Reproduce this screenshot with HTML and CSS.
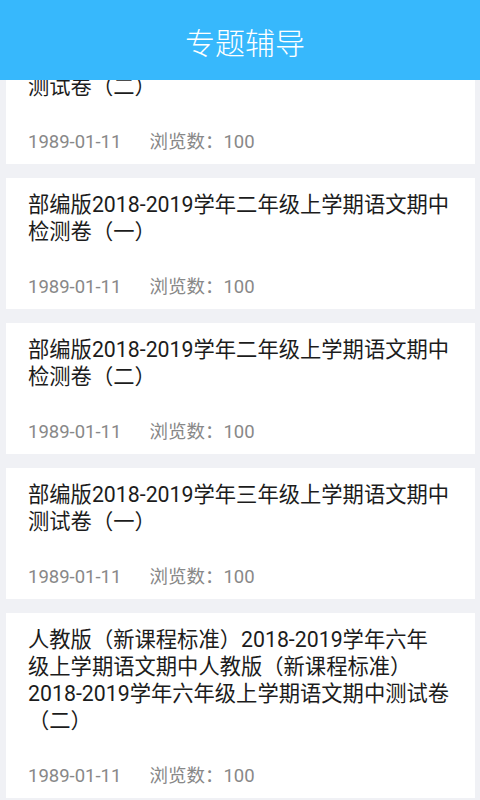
FILE: index.html
```html
<!DOCTYPE html>
<html lang="zh-CN">
<head>
<meta charset="utf-8">
<title>专题辅导</title>
<link rel="stylesheet" href="styles.css">
</head>
<body>
<div class="app">
<header class="topbar"><h1 class="topbar-title">专题辅导</h1></header>
<main class="list" id="list">
  <article class="card">
    <h2 class="card-title">部编版2018-2019学年二年级上学期语文期中<br>测试卷（二）</h2>
    <div class="card-meta"><span class="date">1989-01-11</span><span>浏览数：100</span></div>
  </article>
  <article class="card">
    <h2 class="card-title">部编版2018-2019学年二年级上学期语文期中<br>检测卷（一）</h2>
    <div class="card-meta"><span class="date">1989-01-11</span><span>浏览数：100</span></div>
  </article>
  <article class="card">
    <h2 class="card-title">部编版2018-2019学年二年级上学期语文期中<br>检测卷（二）</h2>
    <div class="card-meta"><span class="date">1989-01-11</span><span>浏览数：100</span></div>
  </article>
  <article class="card">
    <h2 class="card-title">部编版2018-2019学年三年级上学期语文期中<br>测试卷（一）</h2>
    <div class="card-meta"><span class="date">1989-01-11</span><span>浏览数：100</span></div>
  </article>
  <article class="card">
    <h2 class="card-title">人教版（新课程标准）2018-2019学年六年<br>级上学期语文期中人教版（新课程标准）<br>2018-2019学年六年级上学期语文期中测试卷<br>（二）</h2>
    <div class="card-meta"><span class="date">1989-01-11</span><span>浏览数：100</span></div>
  </article>
</main>
</div>
<script src="app.js"></script>
</body>
</html>
```

FILE: styles.css
```css
* { box-sizing: border-box; }
html, body {
  margin: 0;
  padding: 0;
  height: 100%;
  background: #f0f1f5;
  font-family: Roboto, "Noto Sans CJK SC", sans-serif;
  overflow: hidden;
}
.app {
  height: 100%;
  display: flex;
  flex-direction: column;
}
.topbar {
  flex: 0 0 80px;
  background: #37b8fc;
  display: flex;
  align-items: center;
  justify-content: center;
}
.topbar-title {
  margin: 0;
  color: #ffffff;
  font-size: 30px;
  font-weight: 300;
  letter-spacing: 0;
  padding: 2px 0 0 10px;
}
.list {
  flex: 1 1 auto;
  min-height: 0;
  overflow-y: auto;
  scrollbar-width: none;
  display: flex;
  flex-direction: column;
  gap: 14px;
  padding: 14px 5px 20px 6px;
}
.list::-webkit-scrollbar { display: none; }
.card {
  flex: 0 0 auto;
  background: #ffffff;
  padding: 13px 10px 10px 22px;
  min-height: 131px;
}
.card-title {
  margin: 0;
  font-size: 21.3px;
  line-height: 27px;
  font-weight: normal;
  color: #1c1c1c;
  white-space: nowrap;
}
.card-meta {
  margin-top: 30px;
  display: flex;
  gap: 28px;
  font-size: 18.5px;
  line-height: 24px;
  color: #888888;
}
```

FILE: app.js
```js
document.getElementById('list').scrollTop = 61;
```
